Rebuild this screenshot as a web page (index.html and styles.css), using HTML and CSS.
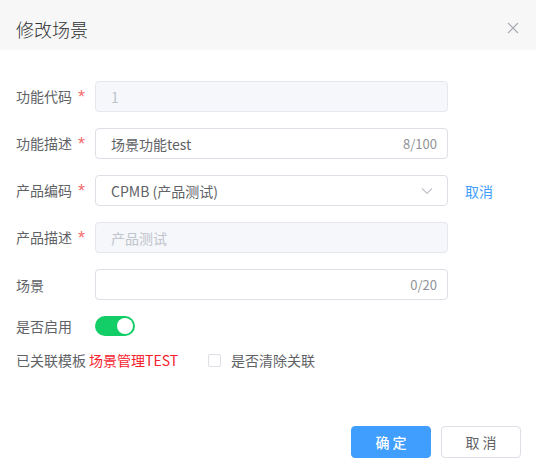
FILE: index.html
```html
<!DOCTYPE html>
<html lang="zh-CN">
<head>
<meta charset="utf-8">
<link rel="stylesheet" href="styles.css">
</head>
<body>
<div class="dialog">
  <div class="header">
    <span class="title">修改场景</span>
    <svg class="close" width="12" height="12" viewBox="0 0 12 12"><path d="M1 1L11 11M11 1L1 11" stroke="#a8abb2" stroke-width="1.2" fill="none"/></svg>
  </div>
  <div class="form">
    <div class="row">
      <label class="label">功能代码<span class="star">*</span></label>
      <div class="input disabled"><span class="val">1</span></div>
    </div>
    <div class="row">
      <label class="label">功能描述<span class="star">*</span></label>
      <div class="input"><span class="val text">场景功能test</span><span class="count">8/100</span></div>
    </div>
    <div class="row">
      <label class="label">产品编码<span class="star">*</span></label>
      <div class="input"><span class="val text">CPMB (产品测试)</span>
        <svg class="arrow" width="12" height="8" viewBox="0 0 12 8"><path d="M1 1.5L6 6.5L11 1.5" stroke="#c0c4cc" stroke-width="1.1" fill="none"/></svg>
      </div>
      <span class="link">取消</span>
    </div>
    <div class="row">
      <label class="label">产品描述<span class="star">*</span></label>
      <div class="input disabled"><span class="val">产品测试</span></div>
    </div>
    <div class="row">
      <label class="label">场景</label>
      <div class="input"><span class="val"></span><span class="count">0/20</span></div>
    </div>
    <div class="row short">
      <label class="label">是否启用</label>
      <div class="switch"><span class="knob"></span></div>
    </div>
    <div class="row assoc">
      <span class="plain">已关联模板</span>
      <span class="red">场景管理TEST</span>
      <span class="checkbox"></span>
      <span class="cblabel">是否清除关联</span>
    </div>
  </div>
  <div class="footer">
    <button class="btn primary">确 定</button>
    <button class="btn">取 消</button>
  </div>
</div>
</body>
</html>
```
FILE: styles.css
```css
* { box-sizing: border-box; }
html, body { margin: 0; padding: 0; background: #fff; }
body {
  width: 536px;
  height: 475px;
  font-family: "Noto Sans CJK SC", "Open Sans", sans-serif;
  color: #606266;
  font-size: 14px;
}
.dialog { width: 536px; height: 475px; background: #fff; }
.header {
  height: 50px;
  background: #f7f7f7;
  display: flex;
  align-items: center;
  justify-content: space-between;
  padding: 0 17px 0 16px;
}
.title { font-size: 18px; color: #303133; line-height: 24px; margin-top: 8px; font-weight: 300; }
.close { margin-top: 6px; }
.form { padding-top: 31px; }
.row {
  display: flex;
  align-items: center;
  height: 31px;
  margin-bottom: 16px;
}
.row.short { height: 21px; margin-top: -1px; margin-bottom: 14px; }
.label {
  width: 95px;
  padding-left: 16px;
  font-size: 14px;
  line-height: 20px;
  color: #606266;
  display: flex;
  align-items: flex-start;
}
.star { color: #f56c6c; margin-left: 6px; font-size: 18px; line-height: 20px; margin-top: 1px; font-family: "Liberation Sans", sans-serif; }
.input {
  width: 353px;
  height: 31px;
  border: 1px solid #dcdfe6;
  border-radius: 4px;
  display: flex;
  align-items: center;
  padding: 0 10px 0 15px;
  background: #fff;
}
.input.disabled { background: #f5f7fa; border-color: #e4e7ed; color: #c0c4cc; }
.val { flex: 1; line-height: 20px; font-size: 14px; }
.text { color: #606266; }
.count { color: #909399; font-size: 13px; line-height: 20px; }
.arrow { margin-right: 4px; }
.link { color: #409eff; margin-left: 17px; font-size: 14px; line-height: 20px; }
.switch {
  width: 40px;
  height: 20px;
  border-radius: 10px;
  background: #13ce66;
  position: relative;
}
.knob {
  position: absolute;
  right: 2px;
  top: 2px;
  width: 16px;
  height: 16px;
  border-radius: 50%;
  background: #fff;
}
.assoc { padding-left: 16px; height: 20px; }
.plain { line-height: 20px; }
.red { color: #f5222d; margin-left: 3px; line-height: 20px; }
.checkbox {
  width: 13px;
  height: 13px;
  border: 1px solid #dcdfe6;
  border-radius: 2px;
  margin-left: 30px;
  background: #fff;
}
.cblabel { margin-left: 10px; line-height: 20px; }
.footer {
  display: flex;
  justify-content: flex-end;
  gap: 10px;
  padding: 0 15px 0 0;
  margin-top: 56px;
}
.btn {
  width: 80px;
  height: 32px;
  border: 1px solid #dcdfe6;
  border-radius: 4px;
  background: #fff;
  color: #606266;
  font-family: "Noto Sans CJK SC", sans-serif;
  font-size: 14px;
  padding: 0;
}
.btn.primary { background: #409eff; border-color: #409eff; color: #fff; font-weight: 500; }
```
